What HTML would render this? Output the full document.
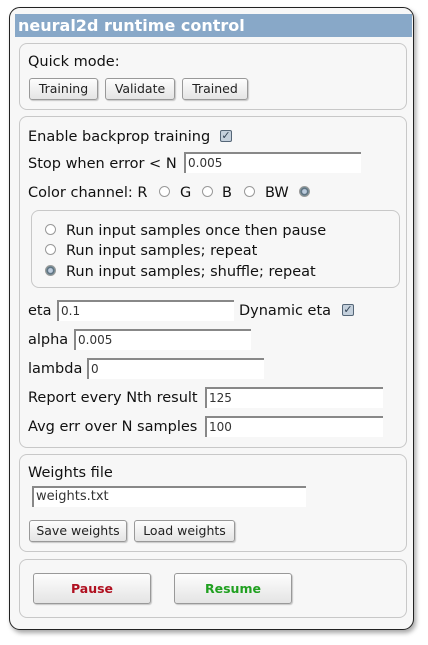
<!DOCTYPE html><html><head><style>
*{box-sizing:border-box;margin:0;padding:0}
body{width:428px;height:645px;background:#fff;font-family:"DejaVu Sans",sans-serif;font-size:14.5px;color:#111;position:relative;overflow:hidden}
.a{position:absolute}
.outer{left:9px;top:7px;width:405px;height:623px;border:1px solid #222;border-radius:11px;background:#f7f7f7;box-shadow:2px 3px 5px rgba(0,0,0,.35)}
.title{left:15px;top:14px;width:397px;height:23px;background:#88a8c8;color:#fff;font-weight:bold;font-size:16px;line-height:23px;padding-left:3px}
.sec{border:1px solid #c8c8c8;border-radius:8px;background:#f7f7f7;left:19px;width:388px}
.t{white-space:nowrap;line-height:18px}
.btn{border:1px solid #999;border-radius:3px;background:linear-gradient(#fdfdfd,#e4e4e4);font-size:12.5px;text-align:center;color:#222;box-shadow:1px 1px 1px rgba(0,0,0,.2)}
.inp{background:#fff;border-top:2px solid #888;border-left:2px solid #888;font-size:12px;color:#333;padding-left:2px;line-height:18px}
.rad{width:11px;height:11px;border:1px solid #999;border-radius:50%;background:#fff}
.rad.on{background:radial-gradient(#bcd 0 2px,#567 3px,#8aa 5px)}
.cb{width:12px;height:12px;border:1px solid #567;background:#c4d0dc;border-radius:2px;color:#345;font-size:11px;line-height:10px;text-align:center;font-weight:bold}
</style></head><body>
<div class="a outer"></div>
<div class="a title">neural2d runtime control</div>

<div class="a sec" style="top:43px;height:67px"></div>
<div class="a t" style="left:28px;top:53px">Quick mode:</div>
<div class="a btn" style="left:29px;top:78px;width:69px;height:22px;line-height:20px">Training</div>
<div class="a btn" style="left:105px;top:78px;width:70px;height:22px;line-height:20px">Validate</div>
<div class="a btn" style="left:182px;top:78px;width:66px;height:22px;line-height:20px">Trained</div>

<div class="a sec" style="top:116px;height:332px"></div>
<div class="a t" style="left:28px;top:128px">Enable backprop training</div>
<div class="a cb" style="left:220px;top:130px">✓</div>
<div class="a t" style="left:28px;top:155px">Stop when error &lt; N</div>
<div class="a inp" style="left:184px;top:152px;width:177px;height:21px">0.005</div>
<div class="a t" style="left:28px;top:184px">Color channel: R</div>
<div class="a rad" style="left:159px;top:186px"></div>
<div class="a t" style="left:180px;top:184px">G</div>
<div class="a rad" style="left:202px;top:186px"></div>
<div class="a t" style="left:222px;top:184px">B</div>
<div class="a rad" style="left:244px;top:186px"></div>
<div class="a t" style="left:265px;top:184px">BW</div>
<div class="a rad on" style="left:299px;top:186px"></div>

<div class="a sec" style="left:31px;top:210px;width:369px;height:78px"></div>
<div class="a rad" style="left:45px;top:224px"></div>
<div class="a t" style="left:66px;top:222px">Run input samples once then pause</div>
<div class="a rad" style="left:45px;top:244px"></div>
<div class="a t" style="left:66px;top:242px">Run input samples; repeat</div>
<div class="a rad on" style="left:45px;top:265px"></div>
<div class="a t" style="left:66px;top:263px">Run input samples; shuffle; repeat</div>

<div class="a t" style="left:28px;top:302px">eta</div>
<div class="a inp" style="left:57px;top:300px;width:177px;height:21px">0.1</div>
<div class="a t" style="left:239px;top:302px">Dynamic eta</div>
<div class="a cb" style="left:342px;top:304px">✓</div>
<div class="a t" style="left:28px;top:331px">alpha</div>
<div class="a inp" style="left:74px;top:329px;width:177px;height:21px">0.005</div>
<div class="a t" style="left:28px;top:360px">lambda</div>
<div class="a inp" style="left:87px;top:358px;width:177px;height:21px">0</div>
<div class="a t" style="left:28px;top:389px">Report every Nth result</div>
<div class="a inp" style="left:205px;top:387px;width:178px;height:21px">125</div>
<div class="a t" style="left:28px;top:418px">Avg err over N samples</div>
<div class="a inp" style="left:205px;top:416px;width:178px;height:21px">100</div>

<div class="a sec" style="top:454px;height:98px"></div>
<div class="a t" style="left:28px;top:464px">Weights file</div>
<div class="a inp" style="left:32px;top:486px;width:274px;height:21px;font-size:13px">weights.txt</div>
<div class="a btn" style="left:29px;top:520px;width:98px;height:22px;line-height:20px">Save weights</div>
<div class="a btn" style="left:134px;top:520px;width:101px;height:22px;line-height:20px">Load weights</div>

<div class="a sec" style="top:559px;height:59px"></div>
<div class="a btn" style="left:33px;top:573px;width:118px;height:31px;line-height:29px;font-weight:bold;color:#b01020">Pause</div>
<div class="a btn" style="left:174px;top:573px;width:118px;height:31px;line-height:29px;font-weight:bold;color:#20a020">Resume</div>
</body></html>
